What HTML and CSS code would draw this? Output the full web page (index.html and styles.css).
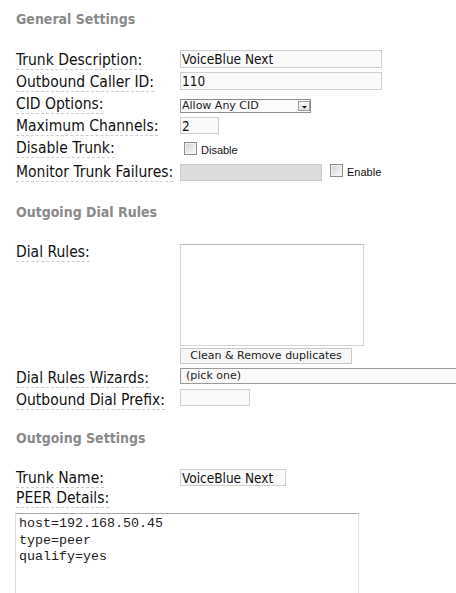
FILE: index.html
```html
<!DOCTYPE html>
<html>
<head>
<meta charset="utf-8">
<title>Edit Trunk</title>
<link rel="stylesheet" href="styles.css">
</head>
<body>
<div class="page">
  <h2 class="section-title first">General Settings</h2>

  <div class="row r22">
    <div class="lbl"><span class="info">Trunk Description:</span></div>
    <div class="ctl"><input class="txt w-long mt2" type="text" value="VoiceBlue Next"></div>
  </div>
  <div class="row r22">
    <div class="lbl"><span class="info">Outbound Caller ID:</span></div>
    <div class="ctl"><input class="txt w-long mt2" type="text" value="110"></div>
  </div>
  <div class="row r22">
    <div class="lbl"><span class="info">CID Options:</span></div>
    <div class="ctl">
      <span class="sel-wrap">
        <select class="sel-cid"><option>Allow Any CID</option></select>
        <span class="sel-arrow"><svg width="9" height="8" viewBox="0 0 9 8"><path d="M2 4h5l-2.5 2.5z" fill="#000"/></svg></span>
      </span>
    </div>
  </div>
  <div class="row r22">
    <div class="lbl"><span class="info">Maximum Channels:</span></div>
    <div class="ctl"><input class="txt short w-max mt3" type="text" value="2"></div>
  </div>
  <div class="row r24">
    <div class="lbl"><span class="info">Disable Trunk:</span></div>
    <div class="ctl">
      <label class="chk chk-dis"><input type="checkbox" class="box"><span class="chk-text">Disable</span></label>
    </div>
  </div>
  <div class="row r24">
    <div class="lbl"><span class="info">Monitor Trunk Failures:</span></div>
    <div class="ctl">
      <input class="txt short w-mon mt4 disabled" type="text" disabled>
      <label class="chk chk-en"><input type="checkbox" class="box"><span class="chk-text">Enable</span></label>
    </div>
  </div>

  <h2 class="section-title mid">Outgoing Dial Rules</h2>

  <div class="row r106">
    <div class="lbl"><span class="info">Dial Rules:</span></div>
    <div class="ctl"><textarea class="rules"></textarea></div>
  </div>
  <div class="row r20">
    <div class="lbl"></div>
    <div class="ctl"><button class="btn" type="button">Clean &amp; Remove duplicates</button></div>
  </div>
  <div class="row r22">
    <div class="lbl"><span class="info">Dial Rules Wizards:</span></div>
    <div class="ctl"><select class="sel-wiz"><option>(pick one)</option></select></div>
  </div>
  <div class="row r22">
    <div class="lbl"><span class="info">Outbound Dial Prefix:</span></div>
    <div class="ctl"><input class="txt short w-pre mt1" type="text"></div>
  </div>

  <h2 class="section-title mid">Outgoing Settings</h2>

  <div class="row r20">
    <div class="lbl"><span class="info">Trunk Name:</span></div>
    <div class="ctl"><input class="txt short w-name mt3" type="text" value="VoiceBlue Next"></div>
  </div>
  <div class="row r22">
    <div class="lbl"><span class="info">PEER Details:</span></div>
    <div class="ctl"></div>
  </div>
  <textarea class="peer">host=192.168.50.45
type=peer
qualify=yes</textarea>
</div>
</body>
</html>
```

FILE: styles.css
```css
html, body {
  margin: 0;
  padding: 0;
  background: #fff;
  overflow: hidden;
}

.page {
  padding-left: 16px;
  font-family: "DejaVu Sans Condensed", "DejaVu Sans", sans-serif;
  color: #111;
}

.section-title {
  margin: 0;
  font-family: "DejaVu Sans Condensed", "DejaVu Sans", sans-serif;
  font-weight: bold;
  font-size: 14px;
  line-height: 18px;
  color: #8a8a8a;
}
.section-title.first { margin-top: 10px; margin-bottom: 20px; }
.section-title.mid { margin-top: 19px; margin-bottom: 19px; }

.row {
  display: grid;
  grid-template-columns: 164px 1fr;
  align-items: start;
}
.r20 { height: 20px; }
.r22 { height: 22px; }
.r24 { height: 24px; }
.r106 { height: 106px; }

.lbl {
  font-size: 15.5px;
  line-height: 22px;
  padding-top: 1px;
  white-space: nowrap;
}
.info {
  border-bottom: 1px dashed #cdcdcd;
}

.ctl {
  display: flex;
  align-items: flex-start;
}

.txt {
  box-sizing: border-box;
  margin: 0;
  height: 18px;
  padding: 0 1px;
  border: 1px solid #cfcfcf;
  background: #fafafa;
  font-family: "DejaVu Sans Condensed", "DejaVu Sans", sans-serif;
  font-size: 13.5px;
  color: #111;
  outline: none;
}
.txt.short { height: 17px; }
.w-long { width: 202px; }
.w-max { width: 39px; }
.w-mon { width: 142px; }
.w-pre { width: 70px; }
.w-name { width: 106px; }
.mt1 { margin-top: 1px; }
.mt2 { margin-top: 2px; }
.mt3 { margin-top: 3px; }
.mt4 { margin-top: 4px; }
.disabled {
  background: #dcdcdc;
  border-color: #c9c9c9;
}

.sel-wrap {
  position: relative;
  display: inline-block;
  margin-top: 7px;
}
.sel-cid {
  -webkit-appearance: none;
  appearance: none;
  box-sizing: border-box;
  display: block;
  margin: 0;
  width: 131px;
  height: 14px;
  padding: 0 1px;
  border: 1px solid #8f8f8f;
  border-radius: 0;
  background: #fbfbfb;
  font-family: "DejaVu Sans", sans-serif;
  font-size: 11px;
  line-height: 12px;
  color: #222;
}
.sel-arrow {
  position: absolute;
  top: 2px;
  right: 1px;
  box-sizing: border-box;
  width: 12px;
  height: 10px;
  border: 1px solid #9c9c9c;
  background: linear-gradient(#fafafa, #e2e2e2);
  display: flex;
  align-items: center;
  justify-content: center;
}
.sel-arrow svg { display: block; }

.chk {
  display: flex;
  align-items: flex-start;
}
.chk-dis { margin-top: 6px; margin-left: 4px; }
.chk-en { margin-top: 4px; margin-left: 8px; }
.box {
  -webkit-appearance: none;
  appearance: none;
  box-sizing: border-box;
  margin: 0;
  width: 13px;
  height: 13px;
  border: 1px solid #8c8c8c;
  background: linear-gradient(135deg, #d2d2d2 0%, #e6e6e6 50%, #fbfbfb 100%);
  box-shadow: inset 0 0 0 1px #f4f4f4;
}
.chk-text {
  margin-left: 4px;
  margin-top: 1px;
  font-family: "Liberation Sans", Arial, sans-serif;
  font-size: 11px;
  line-height: 14px;
  color: #111;
}

.rules {
  box-sizing: border-box;
  margin: 4px 0 0;
  width: 184px;
  height: 102px;
  padding: 2px;
  border: 1px solid #d2d5db;
  border-top-color: #b9b9bd;
  background: #fff;
  resize: none;
  outline: none;
}

.btn {
  box-sizing: border-box;
  margin: 2px 0 0;
  width: 172px;
  height: 16px;
  padding: 0;
  border: 1px solid #c8c8c8;
  background: #f7f7f7;
  font-family: "DejaVu Sans", sans-serif;
  font-size: 11px;
  line-height: 14px;
  color: #222;
}

.sel-wiz {
  -webkit-appearance: none;
  appearance: none;
  box-sizing: border-box;
  margin: 2px 0 0;
  width: 300px;
  height: 16px;
  padding: 0 5px;
  border: 1px solid #9a9a9a;
  border-radius: 0;
  background: #f9f9f9;
  font-family: "DejaVu Sans", sans-serif;
  font-size: 11px;
  line-height: 14px;
  color: #222;
}

.peer {
  display: block;
  box-sizing: border-box;
  margin: 5px 0 0 -1px;
  width: 344px;
  height: 130px;
  padding: 2px 3px;
  border: 1px solid #dcdcdc;
  border-top-color: #a9a9a9;
  background: #fff;
  font-family: "Liberation Mono", "Courier New", monospace;
  font-size: 13.33px;
  line-height: 16.5px;
  color: #222;
  resize: none;
  outline: none;
}
```
